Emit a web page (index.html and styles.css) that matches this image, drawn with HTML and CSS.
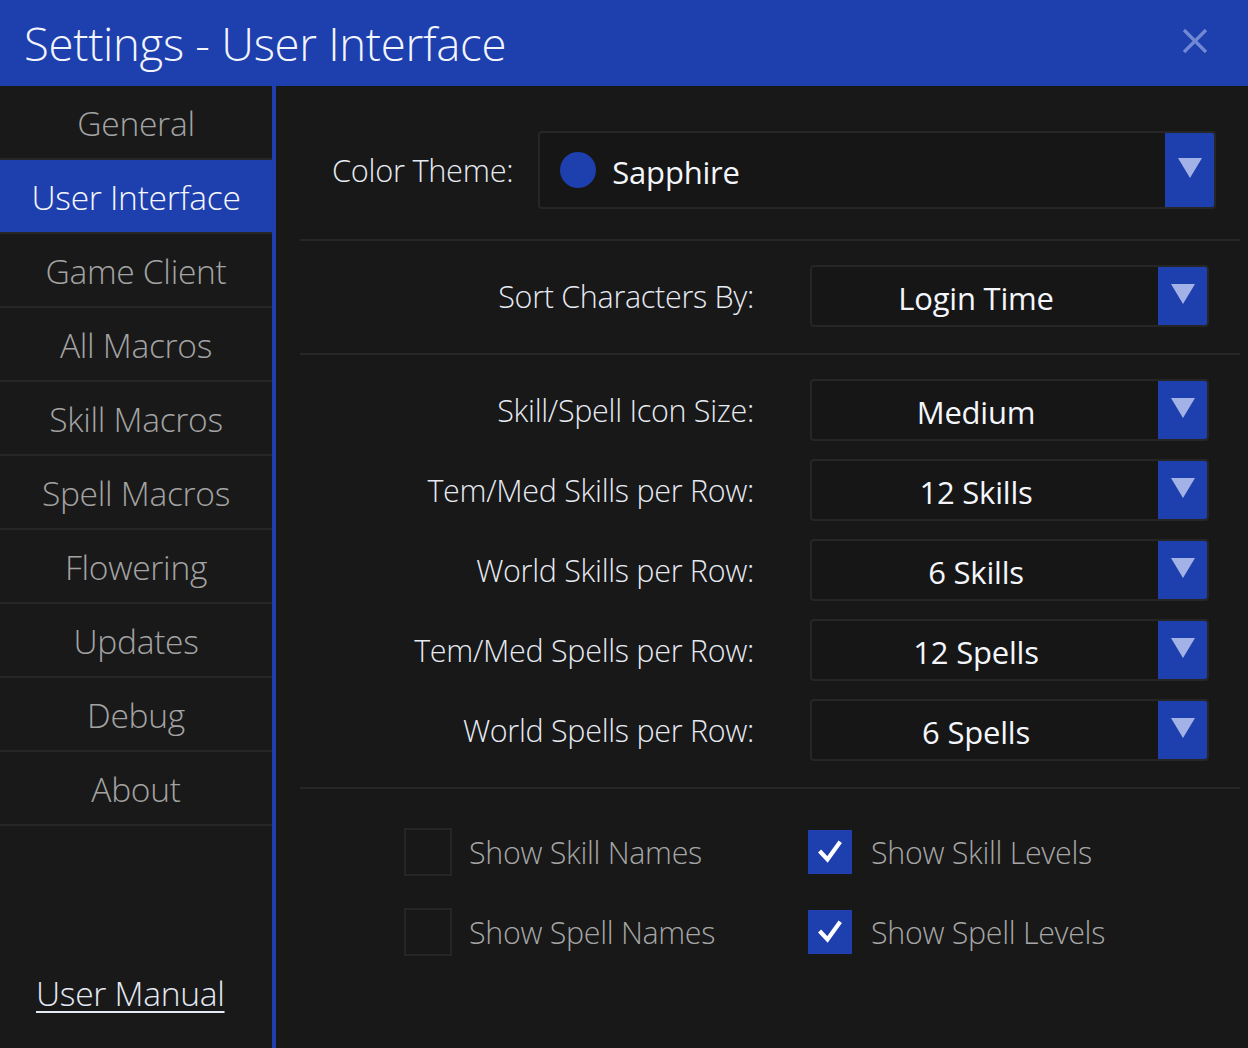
FILE: index.html
```html
<!DOCTYPE html>
<html>
<head>
<meta charset="utf-8">
<link rel="stylesheet" href="styles.css">
</head>
<body>
<header class="header">
  <h1 class="title">Settings - User Interface</h1>
  <button class="close" aria-label="Close">
    <svg width="26" height="26" viewBox="0 0 26 26"><path d="M2 2 L24 24 M24 2 L2 24" stroke="#7189d4" stroke-width="3.2" fill="none"/></svg>
  </button>
</header>
<div class="main">
  <nav class="sidebar">
    <ul class="nav">
      <li class="nav-item">General</li>
      <li class="nav-item active">User Interface</li>
      <li class="nav-item">Game Client</li>
      <li class="nav-item">All Macros</li>
      <li class="nav-item">Skill Macros</li>
      <li class="nav-item">Spell Macros</li>
      <li class="nav-item">Flowering</li>
      <li class="nav-item">Updates</li>
      <li class="nav-item">Debug</li>
      <li class="nav-item">About</li>
    </ul>
    <a class="manual" href="#">User Manual</a>
  </nav>
  <section class="content">
    <div class="theme-row">
      <span class="label">Color Theme:</span>
      <div class="select theme-select">
        <div class="select-value left"><span class="swatch"></span>Sapphire</div>
        <div class="select-btn"><span class="tri"></span></div>
      </div>
    </div>
    <div class="sep"></div>
    <div class="group">
      <div class="row">
        <span class="label rlabel">Sort Characters By:</span>
        <div class="select"><div class="select-value">Login Time</div><div class="select-btn"><span class="tri"></span></div></div>
      </div>
    </div>
    <div class="sep"></div>
    <div class="group rows">
      <div class="row">
        <span class="label rlabel">Skill/Spell Icon Size:</span>
        <div class="select"><div class="select-value">Medium</div><div class="select-btn"><span class="tri"></span></div></div>
      </div>
      <div class="row">
        <span class="label rlabel">Tem/Med Skills per Row:</span>
        <div class="select"><div class="select-value">12 Skills</div><div class="select-btn"><span class="tri"></span></div></div>
      </div>
      <div class="row">
        <span class="label rlabel">World Skills per Row:</span>
        <div class="select"><div class="select-value">6 Skills</div><div class="select-btn"><span class="tri"></span></div></div>
      </div>
      <div class="row">
        <span class="label rlabel">Tem/Med Spells per Row:</span>
        <div class="select"><div class="select-value">12 Spells</div><div class="select-btn"><span class="tri"></span></div></div>
      </div>
      <div class="row">
        <span class="label rlabel">World Spells per Row:</span>
        <div class="select"><div class="select-value">6 Spells</div><div class="select-btn"><span class="tri"></span></div></div>
      </div>
    </div>
    <div class="sep"></div>
    <div class="checks">
      <label class="check"><span class="box"></span><span class="check-label">Show Skill Names</span></label>
      <label class="check"><span class="box checked"><svg width="30" height="30" viewBox="0 0 30 30"><path d="M6 15.5 L12.5 22.5 L24 6.5" stroke="#fff" stroke-width="4.2" fill="none" stroke-linecap="square"/></svg></span><span class="check-label">Show Skill Levels</span></label>
      <label class="check"><span class="box"></span><span class="check-label">Show Spell Names</span></label>
      <label class="check"><span class="box checked"><svg width="30" height="30" viewBox="0 0 30 30"><path d="M6 15.5 L12.5 22.5 L24 6.5" stroke="#fff" stroke-width="4.2" fill="none" stroke-linecap="square"/></svg></span><span class="check-label">Show Spell Levels</span></label>
    </div>
  </section>
</div>
</body>
</html>
```
FILE: styles.css
```css
* { box-sizing: border-box; }
html, body { margin: 0; padding: 0; }
body {
  background: #181818;
  font-family: "Open Sans", "Noto Sans", sans-serif;
  color: #e8ecf4;
  width: 1248px;
  height: 1048px;
  overflow: hidden;
}
.header {
  height: 86px;
  background: #1e3fae;
  display: flex;
  align-items: center;
  justify-content: space-between;
  padding: 0 40px 0 24px;
}
.title {
  margin: 0;
  font-weight: 300;
  font-size: 45.5px;
  color: #f2f5fc;
  letter-spacing: -0.3px;
  line-height: 1;
  padding-top: 2px;
}
.close {
  background: none;
  border: 0;
  padding: 0;
  width: 26px;
  height: 26px;
  margin-top: -4px;
}
.main {
  display: flex;
  height: 962px;
}
.sidebar {
  width: 276px;
  border-right: 4px solid #1e3fae;
  background: #191919;
  display: flex;
  flex-direction: column;
}
.nav {
  list-style: none;
  margin: 0;
  padding: 0;
}
.nav-item {
  height: 74px;
  border-bottom: 2px solid #262626;
  display: flex;
  align-items: center;
  justify-content: center;
  font-size: 33.6px;
  font-weight: 300;
  color: #a3a3a3;
  letter-spacing: -0.3px;
  padding-top: 2px;
}
.nav-item.active {
  background: #1e3fae;
  color: #f4f6fc;
}
.manual {
  margin-top: auto;
  margin-bottom: 32px;
  margin-left: 36px;
  font-size: 33.6px;
  font-weight: 300;
  color: #e4e9f4;
  letter-spacing: -0.3px;
  text-decoration: underline;
  text-decoration-thickness: 2px;
  text-underline-offset: 5px;
}
.content {
  flex: 1;
  padding: 45px 8px 0 24px;
}
.theme-row {
  display: flex;
  align-items: center;
  padding-left: 32px;
  padding-right: 24px;
  gap: 25px;
}
.label {
  font-size: 30.5px;
  font-weight: 300;
  color: #e6eaf2;
  letter-spacing: -0.3px;
}
.theme-row .label { font-size: 30.8px; }
.sep {
  height: 2px;
  background: #262626;
}
.theme-row + .sep { margin-top: 30px; }
.group { padding: 24px 0 26px; }
.rows { display: flex; flex-direction: column; gap: 18px; }
.row {
  display: flex;
  align-items: center;
}
.rlabel {
  width: 454px;
  text-align: right;
  padding-bottom: 1px;
}
.select {
  display: flex;
  height: 62px;
  width: 399px;
  margin-left: 56px;
  border: 2px solid #262626;
  border-radius: 4px;
  background: #161616;
  overflow: hidden;
}
.theme-select {
  flex: 1;
  height: 78px;
  margin-left: 0;
}
.select-value {
  flex: 1;
  display: flex;
  align-items: center;
  justify-content: center;
  font-size: 31px;
  font-weight: 400;
  color: #f4f6fc;
  letter-spacing: -0.2px;
  padding-right: 18px;
  padding-top: 3px;
}
.select-value.left {
  justify-content: flex-start;
  padding-left: 20px;
  padding-right: 0;
  gap: 16px;
}
.swatch {
  width: 36px;
  height: 36px;
  border-radius: 50%;
  background: #1e3fae;
  margin-top: -3px;
}
.select-btn {
  width: 49px;
  background: #1e3fae;
  display: flex;
  align-items: center;
  justify-content: center;
}
.tri {
  width: 0;
  height: 0;
  border-left: 12px solid transparent;
  border-right: 12px solid transparent;
  border-top: 20px solid #a3b2e6;
  margin-bottom: 4px;
}
.checks {
  display: grid;
  grid-template-columns: 404px 404px;
  row-gap: 32px;
  padding: 39px 0 0 104px;
}
.check {
  display: flex;
  align-items: center;
  gap: 17px;
}
.box {
  width: 48px;
  height: 48px;
  border: 2px solid #262626;
  display: flex;
  align-items: center;
  justify-content: center;
}
.box.checked {
  width: 44px;
  height: 44px;
  margin-right: 2px;
  background: #1e3fae;
  border: 0;
}
.check-label {
  font-size: 30.4px;
  font-weight: 300;
  color: #a6a6a6;
  letter-spacing: -0.3px;
}
```
